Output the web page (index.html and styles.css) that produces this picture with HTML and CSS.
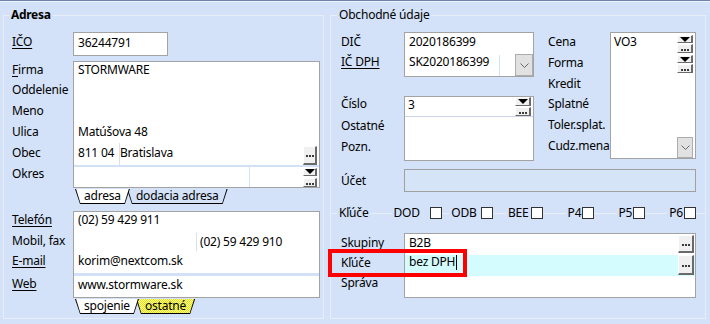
FILE: index.html
```html
<!DOCTYPE html>
<html lang="sk">
<head>
<meta charset="utf-8">
<title>Adresa</title>
<link rel="stylesheet" href="styles.css">
</head>
<body>
<div class="topbar"></div>
<div class="main">
  <section class="group group-left">
    <div class="legend legend-bold">Adresa</div>

    <div class="pair pair-ico">
      <div class="lbls lbls-l lbls-ico"><span><u>IČO</u></span></div>
      <div class="box box-ico">36244791</div>
    </div>

    <div class="pair pair-addr">
      <div class="lbls lbls-l lbls-addr">
        <span><u>F</u>irma</span><span>Oddelenie</span><span>Meno</span><span>Ulica</span><span>Obec</span><span>Okres</span>
      </div>
      <div class="fieldcol">
        <div class="box box-addr">
          <div class="addr-lines">
            <div>STORMWARE</div><div></div><div></div><div>Matúšova 48</div>
          </div>
          <div class="obec-row">
            <span class="psc">811 04</span>
            <span class="city">Bratislava</span>
            <span class="btn btn-dots btn-obec"><svg width="8" height="2" viewBox="0 0 8 2"><rect x="0" width="2" height="2"/><rect x="3" width="2" height="2"/><rect x="6" width="2" height="2"/></svg></span>
          </div>
          <div class="okres-row">
            <span class="okres-a"></span>
            <span class="okres-b"></span>
            <span class="btn-stack stack-okres">
              <span class="btn btn-arrow arrow-8"><svg width="10" height="5" viewBox="0 0 10 5"><path d="M0 0H10L5 5Z"/></svg></span>
              <span class="btn btn-dots dots-9"><svg width="8" height="2" viewBox="0 0 8 2"><rect x="0" width="2" height="2"/><rect x="3" width="2" height="2"/><rect x="6" width="2" height="2"/></svg></span>
            </span>
          </div>
        </div>
        <div class="tabs">
          <span class="tab tab-white tab-front">adresa</span>
          <span class="tab tab-blue">dodacia adresa</span>
        </div>
      </div>
    </div>

    <div class="pair pair-contact">
      <div class="lbls lbls-l lbls-contact">
        <span><u>Telefón</u></span><span>Mobil, fax</span><span><u>E-mail</u></span><span class="lbl-web"><u>Web</u></span>
      </div>
      <div class="fieldcol">
        <div class="box box-contact">
          <div class="c-rows">
            <div class="c-row">(02) 59 429 911</div>
            <div class="c-row c-split"><span class="c-left"></span><span class="c-right">(02) 59 429 910</span></div>
            <div class="c-row">korim@nextcom.sk</div>
          </div>
          <div class="c-band"></div>
          <div class="c-web">www.stormware.sk</div>
        </div>
        <div class="tabs">
          <span class="tab tab-white tab-front">spojenie</span>
          <span class="tab tab-yellow">ostatné</span>
        </div>
      </div>
    </div>
  </section>

  <section class="group group-right">
    <div class="legend legend-r">Obchodné údaje</div>

    <div class="obch-top">
      <div class="suba">
        <div class="pair">
          <div class="lbls lbls-r lbls-20"><span>DIČ</span><span><u>IČ DPH</u></span></div>
          <div class="box box-dic">
            <div class="dic-row1">2020186399</div>
            <div class="dic-row2">
              <span class="dic-val">SK2020186399</span>
              <span class="dic-gap"></span>
              <span class="combo-btn combo-dic"><svg width="9" height="5" viewBox="0 0 9 5"><path d="M0.5 0.5L4.5 4.5L8.5 0.5" fill="none" stroke="#6a6a6a"/></svg></span>
            </div>
          </div>
        </div>
        <div class="pair pair-cislo">
          <div class="lbls lbls-r lbls-cislo"><span>Číslo</span><span>Ostatné</span><span>Pozn.</span></div>
          <div class="box box-cislo">
            <div class="cislo-row1">
              <span class="cislo-val">3</span>
              <span class="btn-stack stack-cislo">
                <span class="btn btn-arrow arrow-9"><svg width="10" height="5" viewBox="0 0 10 5"><path d="M0 0H10L5 5Z"/></svg></span>
                <span class="btn btn-dots dots-9"><svg width="8" height="2" viewBox="0 0 8 2"><rect x="0" width="2" height="2"/><rect x="3" width="2" height="2"/><rect x="6" width="2" height="2"/></svg></span>
              </span>
            </div>
          </div>
        </div>
      </div>

      <div class="subb">
        <div class="lbls lbls-cena">
          <span>Cena</span><span>Forma</span><span>Kredit</span><span>Splatné</span><span>Toler.splat.</span><span>Cudz.mena</span>
        </div>
        <div class="box box-cena">
          <div class="cena-text">VO3</div>
          <div class="cena-btns">
            <span class="btn btn-arrow arrow-8"><svg width="10" height="5" viewBox="0 0 10 5"><path d="M0 0H10L5 5Z"/></svg></span>
            <span class="btn btn-dots dots-9"><svg width="8" height="2" viewBox="0 0 8 2"><rect x="0" width="2" height="2"/><rect x="3" width="2" height="2"/><rect x="6" width="2" height="2"/></svg></span>
            <span class="btn btn-arrow arrow-8 gap-top"><svg width="10" height="5" viewBox="0 0 10 5"><path d="M0 0H10L5 5Z"/></svg></span>
            <span class="btn btn-dots dots-9"><svg width="8" height="2" viewBox="0 0 8 2"><rect x="0" width="2" height="2"/><rect x="3" width="2" height="2"/><rect x="6" width="2" height="2"/></svg></span>
            <span class="combo-btn combo-cena"><svg width="9" height="5" viewBox="0 0 9 5"><path d="M0.5 0.5L4.5 4.5L8.5 0.5" fill="none" stroke="#6a6a6a"/></svg></span>
          </div>
        </div>
      </div>
    </div>

    <div class="pair pair-ucet">
      <div class="lbls lbls-r lbls-ucet"><span>Účet</span></div>
      <div class="box box-ucet"></div>
    </div>

    <div class="kluce-row">
      <span class="kl-title">Kľúče</span>
      <span class="kl-item"><span class="kl-t">DOD</span><span class="chk"></span></span>
      <span class="kl-item"><span class="kl-t">ODB</span><span class="chk"></span></span>
      <span class="kl-item"><span class="kl-t">BEE</span><span class="chk"></span></span>
      <span class="kl-item"><span class="kl-t">P4</span><span class="chk"></span></span>
      <span class="kl-item"><span class="kl-t">P5</span><span class="chk"></span></span>
      <span class="kl-item"><span class="kl-t">P6</span><span class="chk"></span></span>
    </div>

    <div class="pair pair-skup">
      <div class="lbls lbls-r lbls-skup"><span>Skupiny</span><span>Kľúče</span><span>Správa</span></div>
      <div class="box box-skup">
        <div class="skup-row skup-r1">
          <span class="skup-val">B2B</span>
          <span class="btn btn-dots skup-btn1"><svg width="8" height="2" viewBox="0 0 8 2"><rect x="0" width="2" height="2"/><rect x="3" width="2" height="2"/><rect x="6" width="2" height="2"/></svg></span>
        </div>
        <div class="skup-row skup-r2">
          <span class="skup-val2">bez DPH<span class="caret"></span></span>
          <span class="btn btn-dots skup-btn2"><svg width="8" height="2" viewBox="0 0 8 2"><rect x="0" width="2" height="2"/><rect x="3" width="2" height="2"/><rect x="6" width="2" height="2"/></svg></span>
        </div>
      </div>
      <div class="highlight"></div>
    </div>
  </section>
</div>
</body>
</html>
```

FILE: styles.css
```css
* { box-sizing: border-box; }
html, body { margin: 0; padding: 0; }
body {
  width: 710px;
  height: 324px;
  overflow: hidden;
  background: #d3e2f8;
  font-family: "Noto Sans", "Open Sans", sans-serif;
  font-size: 12px;
  letter-spacing: -0.2px;
  color: #000;
}
u { text-decoration: underline; text-underline-offset: 2px; }

.topbar {
  height: 2px;
  border-top: 1px solid #6f84a8;
  background: #eef3fb;
}
.main {
  display: flex;
  gap: 6px;
  height: 317px;
  padding: 13px 4px 0 3px;
}
.group {
  border: 1px solid #e8eef8;
  display: flex;
  flex-direction: column;
  align-items: flex-start;
}
.group-left { width: 321px; padding: 0 3px 0 8px; }
.group-right { width: 376px; padding: 0 9px 0 10px; }

.legend {
  margin-top: -9px;
  padding: 0 2px;
  line-height: 16px;
  height: 16px;
  background: #d3e2f8;
}
.legend-bold { font-weight: 700; margin-left: -3px; letter-spacing: -0.3px; }
.legend-r { margin-left: -4px; }

.pair { display: flex; align-items: flex-start; }
.lbls { display: flex; flex-direction: column; flex: none; white-space: nowrap; }
.lbls span { display: block; }
.lbls-l { width: 61px; }
.lbls-r { width: 63px; }

.box {
  background: #fff;
  border: 1px solid #a3a3a3;
  flex: none;
}

/* Left: IČO */
.pair-ico { margin-top: 9px; }
.lbls-ico { line-height: 20px; }
.box-ico { width: 95px; height: 24px; padding-left: 4px; line-height: 20px; }

/* Left: address */
.pair-addr { margin-top: 5px; }
.lbls-addr { line-height: 20.8px; margin-top: -1.4px; }
.fieldcol { display: flex; flex-direction: column; width: 247px; }
.box-addr { height: 127px; display: flex; flex-direction: column; overflow: hidden; }
.addr-lines { margin-top: -2.5px; line-height: 20.8px; padding-left: 4px; }
.addr-lines div { height: 20.8px; }
.obec-row { display: flex; height: 22.8px; line-height: 20.8px; flex: none; }
.psc { width: 45px; padding-left: 4px; }
.city { flex: 1; border-left: 1px solid #d2e1f6; }
.btn-obec { width: 14px; height: 19px; margin: 3.3px 2px 0 0; }
.okres-row { display: flex; flex: 1; border-top: 2px solid #d2e1f6; }
.okres-a { width: 176px; border-right: 1px solid #d2e1f6; }
.okres-b { flex: 1; }
.btn-stack { display: flex; flex-direction: column; flex: none; }
.stack-okres { width: 14px; margin: 0.5px 2px 0 0; gap: 2px; }

/* Buttons */
.btn {
  display: flex;
  justify-content: center;
  align-items: center;
  flex: none;
  background: #f0f0f0;
  border-style: solid;
  border-width: 1px 2px 2px 1px;
  border-color: #ffffff #6a6a6a #6a6a6a #ffffff;
}
.btn svg { display: block; fill: #3a3a3a; }
.btn-arrow svg { fill: #000; }
.arrow-8 { height: 8px; border-bottom-width: 1px; }
.arrow-9 { height: 9px; border-bottom-width: 1px; }
.dots-9 { height: 9px; align-items: flex-end; padding-bottom: 1px; border-bottom-width: 1px; }
.btn-dots { padding-top: 2px; }
.dots-9.btn-dots { padding-top: 0; }

.combo-btn {
  display: flex;
  justify-content: center;
  align-items: center;
  flex: none;
  background: #e1e1e1;
  border: 1px solid #adadad;
}
.combo-btn svg { display: block; }

/* Tabs */
.tabs { display: flex; height: 15px; margin-top: 1px; padding-left: 2px; }
.tab {
  position: relative;
  isolation: isolate;
  height: 15px;
  line-height: 14px;
  padding: 0 9px;
  white-space: nowrap;
  --tab-bg: #d3e2f8;
}
.tab + .tab { margin-left: -3px; }
.tab-front { z-index: 2; }
.tab-white { --tab-bg: #ffffff; }
.tab-blue { --tab-bg: #d3e2f8; }
.tab-yellow { --tab-bg: repeating-conic-gradient(#e4e400 0 25%, #ffffb0 0 50%) 0 0 / 2px 2px; }
.tab::before, .tab::after {
  content: "";
  position: absolute;
  inset: 0;
  z-index: -1;
}
.tab::before {
  background: #000;
  clip-path: polygon(0 0, 100% 0, calc(100% - 5px) 100%, 5px 100%);
}
.tab::after {
  background: var(--tab-bg);
  clip-path: polygon(1.1px 0, calc(100% - 1.1px) 0, calc(100% - 5.4px) calc(100% - 1px), 5.4px calc(100% - 1px));
}

/* Left: contacts */
.pair-contact { margin-top: 7px; }
.lbls-contact { line-height: 20.5px; margin-top: -1px; }
.lbl-web { margin-top: 2px; }
.box-contact { height: 87px; display: flex; flex-direction: column; overflow: hidden; }
.c-rows { margin-top: -2px; line-height: 20.5px; }
.c-row { height: 20.5px; padding-left: 4px; }
.c-split { display: flex; padding-left: 0; }
.c-left { width: 122px; }
.c-right { border-left: 1px solid #d2e1f6; padding-left: 3px; margin-top: 2px; line-height: 18.5px; }
.c-band { height: 3px; margin-top: 1.5px; background: #d2e1f6; flex: none; }
.c-web { height: 21px; line-height: 17px; padding-left: 4px; }

/* Right top */
.obch-top { display: flex; gap: 14px; margin-top: 9px; height: 129px; }
.suba { display: flex; flex-direction: column; }
.lbls-20 { line-height: 20px; }
.box-dic { width: 130px; height: 45px; }
.dic-row1 { height: 20px; line-height: 18px; padding-left: 4px; }
.dic-row2 { display: flex; height: 23px; }
.dic-val { width: 94px; padding-left: 4px; line-height: 18px; }
.dic-gap { width: 16px; border-left: 1px solid #d2e1f6; margin-top: 2px; }
.combo-dic { width: 18px; height: 22px; margin-top: 1px; }

.pair-cislo { margin-top: 19px; }
.lbls-cislo { line-height: 21.5px; margin-top: -3px; }
.box-cislo { width: 130px; height: 65px; }
.cislo-row1 { display: flex; height: 20px; border-bottom: 1px solid #c9d6ea; }
.cislo-val { flex: 1; padding-left: 3px; line-height: 15px; }
.stack-cislo { width: 16px; margin-right: 2px; gap: 1px; }

.subb { display: flex; align-items: flex-start; }
.lbls-cena { width: 62px; line-height: 20.8px; }
.box-cena { width: 86px; height: 127px; display: flex; }
.cena-text { flex: 1; padding-left: 3px; line-height: 18px; }
.cena-btns { display: flex; flex-direction: column; width: 16px; margin-right: 2px; padding-top: 2px; gap: 1px; }
.gap-top { margin-top: 1px; }
.combo-cena { margin-top: auto; height: 21px; }

/* Účet */
.pair-ucet { margin-top: 8px; }
.lbls-ucet { line-height: 23px; }
.box-ucet { width: 292px; height: 23px; background: #d6e4f8; border-color: #a0a0a0; }

/* Kľúče checkboxes */
.kluce-row {
  display: grid;
  grid-template-columns: 60px repeat(6, 1fr);
  align-items: center;
  align-self: stretch;
  height: 14px;
  margin: 14px -9px 0 -10px;
  padding-right: 9px;
  background: linear-gradient(#e8eef8, #e8eef8) 0 50% / 100% 1px no-repeat;
}
.kl-title { justify-self: start; margin-left: 6px; padding: 0 2px; background: #d3e2f8; line-height: 14px; }
.kl-item { display: flex; justify-content: flex-end; align-items: center; }
.kl-t { background: #d3e2f8; padding: 0 1px 0 2px; line-height: 14px; }
.kl-item:nth-child(2) .kl-t { padding-right: 10px; }
.kl-item:nth-child(3) .kl-t { padding-right: 4px; }
.kl-item:nth-child(4) .kl-t { padding-right: 3px; }
.chk { width: 12px; height: 12px; border: 1px solid #333; background: #fff; flex: none; }

/* Skupiny */
.pair-skup { margin-top: 13px; position: relative; }
.lbls-skup { line-height: 20.4px; margin-top: -0.5px; }
.box-skup { width: 292px; height: 65px; }
.skup-row { display: flex; height: 21px; align-items: flex-start; }
.skup-val { flex: 1; padding-left: 4px; line-height: 17px; }
.skup-r2 { background: #d4fbfd; }
.skup-val2 { flex: 1; padding-left: 4px; line-height: 14px; }
.caret { display: inline-block; width: 1px; height: 15px; background: #000; vertical-align: top; margin-left: 1px; }
.skup-btn1 { width: 16px; height: 18px; margin: 1px 1px 0 0; }
.skup-btn2 { width: 16px; height: 20px; margin: 0 1px 0 0; background: #f0f0f0; }

.highlight {
  position: absolute;
  left: -13px;
  top: 16px;
  width: 139px;
  height: 28px;
  border: 4px solid #f00;
  pointer-events: none;
}
```
